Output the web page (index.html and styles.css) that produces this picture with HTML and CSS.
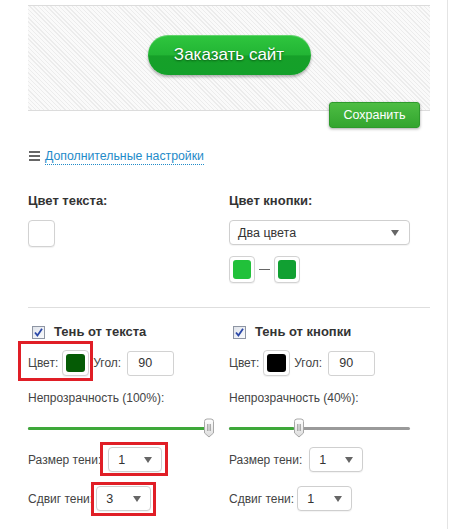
FILE: index.html
```html
<!DOCTYPE html>
<html lang="ru">
<head>
<meta charset="utf-8">
<title>Настройки кнопки</title>
<link rel="stylesheet" href="styles.css">
</head>
<body>
<div class="page">
  <div class="preview">
    <a class="order-btn">Заказать сайт</a>
  </div>
  <div class="save-row">
    <button class="save-btn">Сохранить</button>
  </div>

  <a class="more-link">
    <svg class="burger" width="11" height="10" viewBox="0 0 11 10"><rect y="0" width="11" height="2" fill="#666"/><rect y="4" width="11" height="2" fill="#666"/><rect y="8" width="11" height="2" fill="#666"/></svg>
    <span class="more-text">Дополнительные настройки</span>
  </a>

  <div class="cols colors">
    <div class="col">
      <div class="label-b">Цвет текста:</div>
      <div class="swatch"><span class="fill white"></span></div>
    </div>
    <div class="col">
      <div class="label-b">Цвет кнопки:</div>
      <div class="select wide"><span>Два цвета</span><i class="arrow"></i></div>
      <div class="swatch-pair">
        <div class="swatch small"><span class="fill g1"></span></div>
        <span class="dash"></span>
        <div class="swatch small"><span class="fill g2"></span></div>
      </div>
    </div>
  </div>

  <div class="divider"></div>

  <div class="cols shadows">
    <div class="col">
      <label class="check-row">
        <svg class="cb" width="13" height="13" viewBox="0 0 13 13"><defs><linearGradient id="cbg" x1="0" y1="0" x2="1" y2="1"><stop offset="0" stop-color="#dfe3ea"/><stop offset="1" stop-color="#fbfcfe"/></linearGradient></defs><rect x="0.5" y="0.5" width="12" height="12" fill="url(#cbg)" stroke="#8e95a3"/><path d="M3 6.5 L5.4 9.4 L10 2.8" fill="none" stroke="#2b48a8" stroke-width="1.8"/></svg>
        <span class="label-b">Тень от текста</span>
      </label>
      <div class="param-row">
        <span class="mark mark-color"></span>
        <span>Цвет:</span>
        <div class="swatch"><span class="fill dark-green"></span></div>
        <span>Угол:</span>
        <div class="input">90</div>
      </div>
      <div class="opacity">Непрозрачность (100%):</div>
      <div class="slider s-left">
        <div class="track"><div class="track-fill" style="width:100%"></div></div>
        <svg class="thumb" style="left:175px" width="12" height="20" viewBox="0 0 12 20"><defs><linearGradient id="tg1" x1="0" y1="0" x2="0" y2="1"><stop offset="0" stop-color="#ffffff"/><stop offset="1" stop-color="#dcdcdc"/></linearGradient></defs><path d="M1.5 3.5 Q1.5 1 4 1 H8 Q10.5 1 10.5 3.5 V15 L6 19 L1.5 15 Z" fill="url(#tg1)" stroke="#a8a8a8"/><path d="M4.5 6 V13 M6 6 V13 M7.5 6 V13" stroke="#9a9a9a" stroke-width="0.8"/></svg>
      </div>
      <div class="sel-row size-row">
        <span>Размер тени:</span>
        <div class="select-wrap">
          <span class="mark mark-size"></span>
          <div class="select tiny"><span>1</span><i class="arrow"></i></div>
        </div>
      </div>
      <div class="sel-row offset-row">
        <span>Сдвиг тени:</span>
        <div class="select-wrap">
          <span class="mark mark-offset"></span>
          <div class="select tiny o"><span>3</span><i class="arrow"></i></div>
        </div>
      </div>
    </div>

    <div class="col">
      <label class="check-row">
        <svg class="cb" width="13" height="13" viewBox="0 0 13 13"><defs><linearGradient id="cbg2" x1="0" y1="0" x2="1" y2="1"><stop offset="0" stop-color="#dfe3ea"/><stop offset="1" stop-color="#fbfcfe"/></linearGradient></defs><rect x="0.5" y="0.5" width="12" height="12" fill="url(#cbg2)" stroke="#8e95a3"/><path d="M3 6.5 L5.4 9.4 L10 2.8" fill="none" stroke="#2b48a8" stroke-width="1.8"/></svg>
        <span class="label-b">Тень от кнопки</span>
      </label>
      <div class="param-row">
        <span>Цвет:</span>
        <div class="swatch"><span class="fill black"></span></div>
        <span>Угол:</span>
        <div class="input">90</div>
      </div>
      <div class="opacity">Непрозрачность (40%):</div>
      <div class="slider s-right">
        <div class="track"><div class="track-fill" style="width:36%"></div></div>
        <svg class="thumb" style="left:64px" width="12" height="20" viewBox="0 0 12 20"><defs><linearGradient id="tg2" x1="0" y1="0" x2="0" y2="1"><stop offset="0" stop-color="#ffffff"/><stop offset="1" stop-color="#dcdcdc"/></linearGradient></defs><path d="M1.5 3.5 Q1.5 1 4 1 H8 Q10.5 1 10.5 3.5 V15 L6 19 L1.5 15 Z" fill="url(#tg2)" stroke="#a8a8a8"/><path d="M4.5 6 V13 M6 6 V13 M7.5 6 V13" stroke="#9a9a9a" stroke-width="0.8"/></svg>
      </div>
      <div class="sel-row size-row">
        <span>Размер тени:</span>
        <div class="select tiny"><span>1</span><i class="arrow"></i></div>
      </div>
      <div class="sel-row offset-row">
        <span>Сдвиг тени:</span>
        <div class="select tiny o"><span>1</span><i class="arrow"></i></div>
      </div>
    </div>
  </div>
</div>
</body>
</html>
```
FILE: styles.css
```css
html, body {
  margin: 0;
  padding: 0;
  background: #fff;
}
body {
  font-family: "Liberation Sans", Arial, sans-serif;
  font-size: 12px;
  color: #3a3a3a;
}
.page {
  width: 448px;
  min-height: 529px;
  border-right: 1px solid #e4e4e4;
  box-sizing: border-box;
  padding-top: 5px;
}

/* preview */
.preview {
  box-sizing: border-box;
  margin-left: 28px;
  width: 402px;
  height: 106px;
  border-top: 1px solid #dcdcdc;
  border-bottom: 1px solid #dcdcdc;
  padding-top: 29px;
  display: flex;
  justify-content: center;
  align-items: flex-start;
  background: repeating-linear-gradient(45deg, #fafafa 0, #fafafa 2px, #ececec 2px, #ececec 3px);
}
.order-btn {
  box-sizing: border-box;
  width: 163px;
  height: 40px;
  border-radius: 20px;
  display: flex;
  align-items: center;
  justify-content: center;
  color: #fff;
  font-size: 17px;
  background: linear-gradient(#2fc63e 0%, #22b534 50%, #16a029 52%, #14a02a 100%);
  text-shadow: 0 1px 2px #0a5a14;
  box-shadow: 0 2px 3px rgba(0,0,0,0.3), inset 0 1px 0 rgba(255,255,255,0.25);
}

.save-row {
  margin-left: 28px;
  width: 402px;
  margin-top: -9px;
  padding-right: 10px;
  box-sizing: border-box;
  display: flex;
  justify-content: flex-end;
}
.save-btn {
  box-sizing: border-box;
  width: 91px;
  height: 26px;
  border: 1px solid #2e9a2c;
  border-radius: 3px;
  background: linear-gradient(#4dbd43, #33a52f);
  color: #fff;
  font-family: "Liberation Sans", Arial, sans-serif;
  font-size: 12.5px;
  padding: 0;
  box-shadow: 0 1px 3px rgba(0,0,0,0.35);
}

/* link */
.more-link {
  display: flex;
  align-items: center;
  margin: 20px 0 0 29px;
  height: 16px;
  width: max-content;
}
.burger { margin-right: 5px; }
.more-text {
  color: #1f8bc9;
  font-size: 12.3px;
  line-height: 16px;
  border-bottom: 1px dotted #1f8bc9;
}

.label-b {
  font-weight: bold;
  font-size: 13px;
  color: #333;
  line-height: 16px;
}

.cols {
  display: grid;
  grid-template-columns: 201px 201px;
  margin-left: 28px;
}
.col { display: flex; flex-direction: column; align-items: flex-start; }

.colors { margin-top: 29px; }
.colors .label-b { margin-bottom: 11px; }

.swatch {
  box-sizing: border-box;
  width: 27px;
  height: 27px;
  border: 1px solid #d2d2d2;
  border-radius: 4px;
  background: #fff;
  padding: 3px;
  box-shadow: 0 1px 1px rgba(0,0,0,0.06);
}
.swatch .fill {
  display: block;
  width: 100%;
  height: 100%;
  border-radius: 3px;
}
.fill.white { background: #fff; }
.fill.g1 { background: #21c13a; }
.fill.g2 { background: #11a032; }
.fill.dark-green { background: #055b05; }
.fill.black { background: #000; }

.swatch.small { width: 26px; height: 27px; }

.select {
  box-sizing: border-box;
  height: 25px;
  border: 1px solid #cfcfcf;
  border-radius: 4px;
  background: #fff;
  display: flex;
  align-items: center;
  justify-content: space-between;
  padding: 0 10px 0 8px;
  box-shadow: 0 1px 1px rgba(0,0,0,0.05);
  color: #333;
  font-size: 12.5px;
}
.select.wide { width: 181px; }
.select.tiny { width: 54px; padding: 0 9px 0 9px; }
.select.tiny.o { width: 55px; }
.arrow {
  width: 0;
  height: 0;
  border-left: 4px solid transparent;
  border-right: 4px solid transparent;
  border-top: 6px solid #666;
}

.swatch-pair {
  display: flex;
  align-items: center;
  gap: 4px;
  margin-top: 11px;
}
.dash {
  display: block;
  width: 11px;
  height: 1px;
  background: #666;
}

.divider {
  margin: 24px 0 0 28px;
  width: 402px;
  border-top: 1px solid #dedede;
}

.shadows { margin-top: 16px; }
.check-row {
  display: flex;
  align-items: center;
  height: 16px;
  padding-left: 4px;
  gap: 9px;
}
.param-row {
  position: relative;
  display: flex;
  align-items: center;
  gap: 4px;
  margin-top: 10px;
  height: 26px;
  color: #444;
}
.param-row .swatch { height: 26px; margin-right: 0; }
.input {
  box-sizing: border-box;
  width: 47px;
  height: 25px;
  border: 1px solid #d2d2d2;
  border-radius: 3px;
  padding-left: 10px;
  display: flex;
  align-items: center;
  color: #333;
  font-size: 12.5px;
  margin-left: 2px;
}
.opacity {
  margin-top: 14px;
  line-height: 16px;
  color: #444;
}
.slider {
  position: relative;
  margin-top: 12px;
  height: 20px;
}
.s-left { width: 185px; }
.s-right { width: 181px; }
.track {
  position: absolute;
  left: 0;
  right: 0;
  top: 9px;
  height: 3px;
  background: #9a9a9a;
  border-radius: 2px;
}
.track-fill {
  height: 100%;
  background: #3ea83a;
  border-radius: 2px;
}
.thumb {
  position: absolute;
  top: 0;
}

.sel-row {
  display: flex;
  align-items: center;
  height: 25px;
  color: #444;
}
.size-row { margin-top: 9px; gap: 7px; }
.offset-row { margin-top: 14px; gap: 3px; }
.select-wrap { position: relative; }

.mark {
  position: absolute;
  box-sizing: border-box;
  border: 3px solid #e01e26;
  pointer-events: none;
}
.mark-color { left: -10px; top: -9px; width: 75px; height: 40px; }
.mark-size { left: -8px; top: -5px; width: 68px; height: 34px; }
.mark-offset { left: -5px; top: -4px; width: 65px; height: 34px; }
```
